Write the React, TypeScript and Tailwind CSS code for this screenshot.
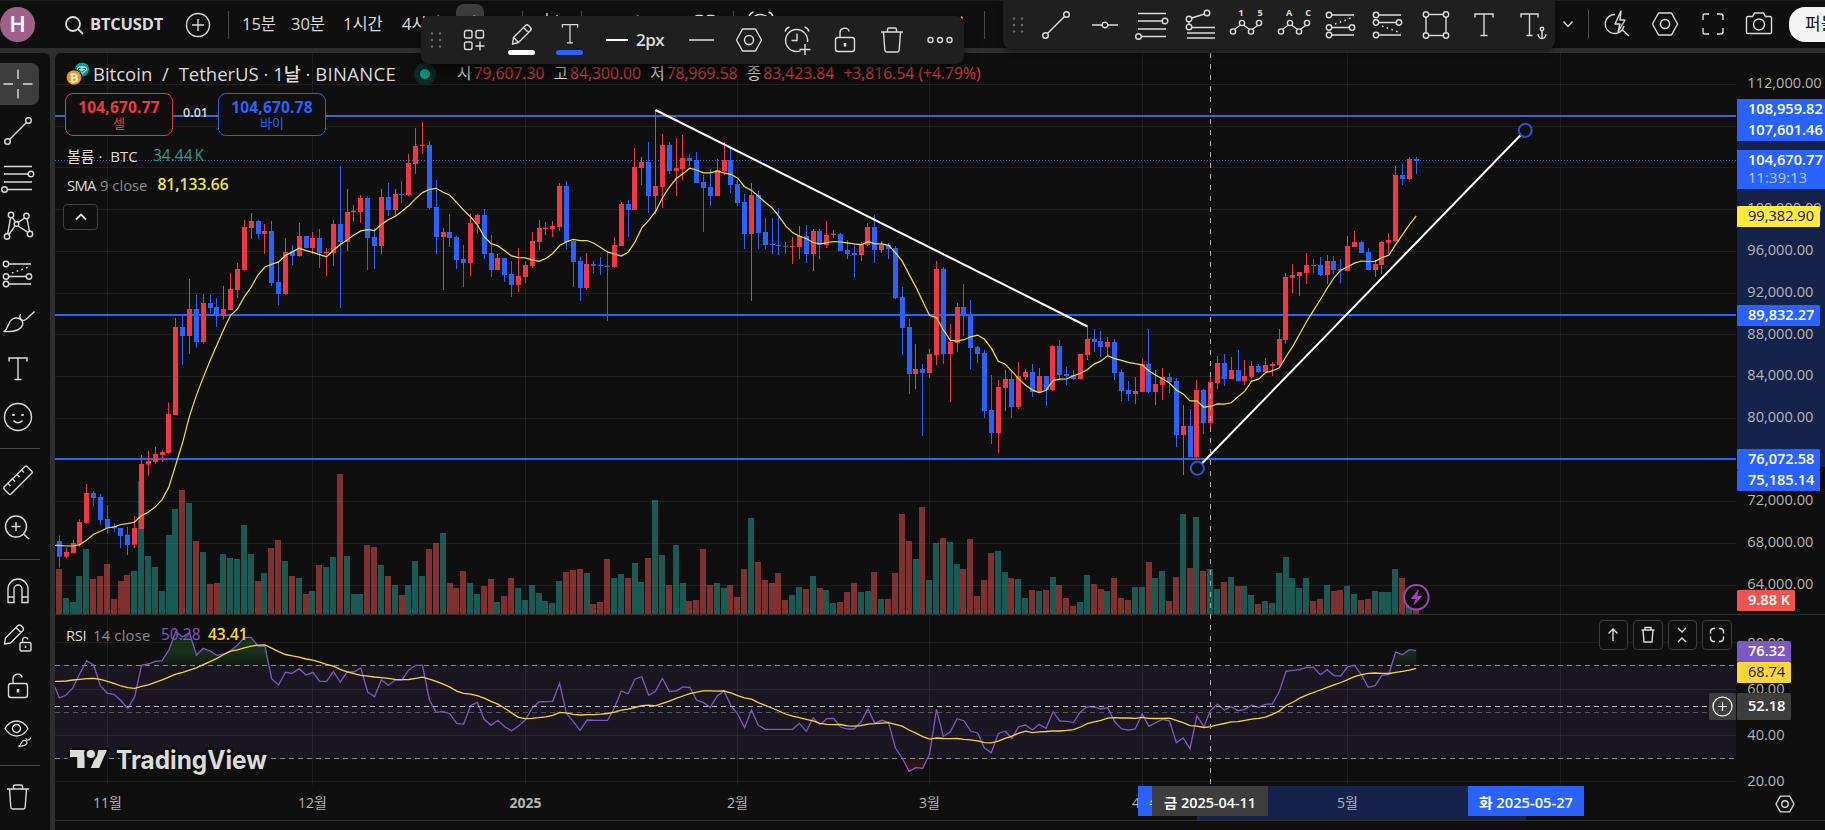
import React from 'react';

type Candle = [number, number, number, number, number]; // high, body top, body bottom, low, up

// Vertical values are stored in thirds of a pixel
const CANDLES: Candle[] = [
  [1606,1623,1670,1703,0],[1644,1656,1670,1676,1],[1618,1629,1659,1660,1],[1558,1566,1632,1640,1],[1452,1479,1569,1571,1],
  [1473,1479,1494,1520,0],[1482,1491,1560,1574,0],[1515,1557,1584,1601,0],[1570,1579,1585,1595,0],[1584,1584,1608,1644,0],
  [1581,1604,1635,1665,0],[1548,1584,1634,1644,1],[1365,1392,1587,1587,1],[1353,1383,1394,1427,1],[1341,1362,1386,1391,1],
  [1350,1356,1365,1386,1],[1207,1242,1359,1362,1],[954,981,1245,1245,1],[948,981,1008,1095,0],[837,927,1008,1062,1],
  [885,927,1026,1043,0],[882,909,1026,1031,1],[885,909,924,939,0],[894,921,945,981,0],[858,927,948,959,1],
  [819,867,930,930,1],[789,807,870,894,1],[660,681,810,812,1],[639,663,684,717,1],[660,663,702,717,0],
  [672,693,702,762,1],[663,693,849,858,0],[786,846,882,915,0],[714,756,882,885,1],[735,754,768,795,0],
  [669,708,768,770,1],[708,708,744,745,0],[696,714,744,762,1],[687,714,759,804,0],[744,756,760,828,1],
  [660,672,759,798,1],[498,672,726,924,0],[567,636,726,753,1],[615,632,637,665,1],[585,594,636,669,1],
  [588,594,714,810,0],[684,711,738,807,0],[567,591,738,762,1],[549,591,630,648,0],[567,582,630,648,1],
  [543,582,585,609,0],[462,489,585,588,1],[384,438,492,522,1],[366,434,438,462,1],[423,435,624,627,0],
  [540,621,711,762,0],[684,696,711,870,1],[642,696,714,741,0],[708,711,780,807,0],[735,777,789,861,0],
  [642,669,789,828,1],[642,645,672,702,1],[627,645,762,777,0],[705,759,810,831,0],[762,774,810,810,1],
  [774,774,825,846,0],[783,822,855,891,0],[744,828,855,876,1],[783,795,831,849,1],[696,723,798,804,1],
  [660,684,726,750,1],[666,683,687,705,1],[663,678,688,711,1],[549,558,681,693,1],[543,558,726,747,0],
  [717,723,786,861,0],[771,783,864,903,0],[759,792,864,870,1],[783,792,798,819,0],[771,794,798,825,0],
  [753,797,801,963,0],[711,735,801,804,1],[606,612,738,738,1],[600,612,630,711,0],[444,501,630,630,1],
  [471,486,504,555,1],[426,486,588,639,0],[330,558,588,642,1],[402,435,561,624,1],[426,435,513,522,0],
  [414,504,513,588,1],[405,474,507,540,1],[462,474,483,498,0],[456,480,549,549,0],[525,546,564,696,0],
  [507,561,588,618,0],[477,510,588,588,1],[426,480,513,525,1],[441,480,555,579,0],[540,552,609,618,0],
  [582,606,702,747,0],[549,585,702,903,1],[573,585,699,747,0],[654,696,735,747,0],[654,732,735,762,0],
  [624,735,738,765,0],[726,737,740,762,0],[711,738,741,792,1],[678,708,741,777,1],[675,708,762,789,0],
  [687,693,762,813,1],[687,693,735,777,0],[663,705,735,744,1],[690,701,705,714,1],[699,702,753,753,0],
  [720,750,762,777,0],[732,759,765,834,0],[726,732,765,783,1],[669,681,735,738,1],[645,681,750,789,0],
  [723,735,750,759,1],[729,735,747,777,0],[738,744,894,897,0],[861,891,984,1065,0],[957,981,1122,1182,0],
  [1032,1107,1122,1167,1],[1092,1107,1119,1308,0],[1047,1062,1119,1134,1],[783,807,1065,1095,1],[801,807,1062,1092,0],
  [972,1026,1062,1206,1],[909,921,1029,1056,1],[852,921,945,1008,0],[900,945,1044,1107,0],[1038,1041,1062,1089,0],
  [1050,1059,1233,1254,0],[1125,1230,1299,1332,0],[1140,1161,1299,1359,1],[1110,1137,1164,1233,1],[1116,1137,1221,1254,0],
  [1086,1128,1221,1227,1],[1107,1116,1131,1140,1],[1092,1116,1176,1191,0],[1104,1128,1176,1179,1],[1128,1128,1170,1218,0],
  [1035,1038,1170,1173,1],[1020,1038,1125,1137,0],[1101,1122,1128,1155,0],[1110,1125,1137,1140,0],[1062,1062,1137,1137,1],
  [978,1017,1065,1080,1],[987,1017,1026,1056,0],[993,1023,1041,1071,0],[1011,1026,1041,1068,1],[1017,1026,1119,1140,0],
  [1107,1116,1173,1203,0],[1143,1170,1182,1203,0],[1131,1173,1182,1212,1],[1077,1092,1176,1176,1],[987,1092,1176,1179,0],
  [1110,1152,1176,1215,1],[1104,1131,1155,1200,1],[1119,1131,1146,1179,0],[1134,1143,1305,1341,0],[1215,1278,1305,1425,1],
  [1227,1278,1371,1371,0],[1140,1170,1371,1380,1],[1167,1170,1269,1302,0],[1131,1146,1269,1281,1],[1068,1089,1149,1167,1],
  [1062,1089,1137,1158,0],[1071,1110,1137,1137,1],[1050,1110,1143,1143,0],[1080,1128,1143,1155,1],[1083,1098,1131,1137,1],
  [1092,1098,1116,1119,0],[1074,1095,1116,1119,1],[1086,1092,1098,1128,1],[987,1017,1095,1098,1],[819,831,1020,1032,1],
  [792,825,834,879,1],[816,816,828,888,1],[759,795,819,852,1],[777,795,798,819,0],[771,795,825,828,0],
  [765,783,825,852,1],[768,783,810,822,0],[777,807,812,850,0],[708,738,813,813,1],[693,726,741,741,1],
  [723,726,759,759,0],[744,756,810,810,0],[780,792,810,831,1],[723,726,795,822,1],[699,720,729,762,1],
  [498,525,723,726,1],[492,525,537,555,0],[471,477,537,540,1],[471,477,483,522,0],
];

const VOLUMES = [
  135,48,36,114,195,105,114,150,45,99,117,129,399,174,141,69,237,315,372,333,219,186,90,93,180,168,165,267,180,99,
  123,198,222,159,114,108,60,69,147,141,171,420,174,60,60,207,201,147,114,87,57,87,159,114,195,213,243,93,78,129,
  93,60,84,105,36,54,108,78,42,87,63,39,33,99,126,132,135,123,30,36,165,108,120,108,153,96,168,342,177,87,
  207,93,39,42,195,87,93,78,87,51,135,288,156,102,93,123,42,57,81,75,114,78,72,33,36,66,93,66,69,126,
  45,45,123,300,219,165,321,102,213,228,216,150,135,225,54,102,183,189,126,108,105,48,72,69,72,111,87,48,24,36,
  117,90,75,69,108,48,42,81,81,156,108,129,39,111,300,138,291,129,135,75,96,111,84,84,57,30,39,33,123,171,
  108,78,108,39,45,87,69,72,84,60,42,45,69,66,66,135,108,24,14,
];

// Offset from the top of the indicator pane, also in thirds
const RSI = [
  264,255,233,190,153,165,228,250,253,272,295,260,166,162,154,152,120,65,80,68,136,115,123,136,132,122,105,82,83,108,
  108,207,225,187,190,176,195,187,214,214,185,216,186,186,174,246,260,209,226,211,210,180,166,166,270,307,305,311,340,343,
  287,277,328,346,331,350,362,348,330,294,276,275,274,220,310,335,361,330,331,331,331,294,243,251,207,200,256,244,205,244,
  243,231,232,270,278,292,258,243,286,312,353,300,346,358,358,358,358,358,340,364,324,344,326,325,351,357,357,335,297,340,
  331,337,414,444,484,473,475,432,298,379,366,326,332,363,369,414,428,371,363,385,350,345,360,343,355,305,333,334,337,306,
  290,291,297,293,335,357,360,357,312,349,338,328,333,398,384,416,317,350,301,282,300,290,302,298,286,292,283,282,246,184,
  181,179,172,172,194,179,197,198,170,166,194,232,227,196,193,126,134,119,121,
];

const SMA_SEED = [1636, 1638, 1638, 1634, 1620, 1603, 1594, 1584];
const RSI_SEED = [214, 213, 210, 208, 206, 205, 208, 214, 220, 228, 233, 235, 229];

const barX = (i: number) => 59.3 + i * 6.853;

const average = (values: number[], length: number, seed: number[]) =>
  values.map((_, i) =>
    i < seed.length ? seed[i] : values.slice(i - length + 1, i + 1).reduce((a, b) => a + b, 0) / length
  );

const toPoints = (ys: number[]) => ys.map((y, i) => `${barX(i).toFixed(1)},${y.toFixed(1)}`).join(' ');

const closes = CANDLES.map(([, top, bottom, , up]) => (up ? top : bottom));
const smaPoints = '55,545.3 ' + toPoints(average(closes, 9, SMA_SEED).map((v) => v / 3));
const rsiPoints = '55,687.3 ' + toPoints(RSI.map((v) => 610 + v / 3));
const rsiMaPoints = '55,681.3 ' + toPoints(average(RSI, 14, RSI_SEED).map((v) => 610 + v / 3));

const FONT = "font-['Open_Sans','Noto_Sans_CJK_KR',sans-serif]";

const MONTHS = [
  { x: 107.5, label: '11월' },
  { x: 312.5, label: '12월' },
  { x: 525.5, label: '2025', bold: true },
  { x: 737.5, label: '2월' },
  { x: 929.5, label: '3월' },
  { x: 1142.5, label: '4월' },
  { x: 1347.5, label: '5월' },
  { x: 1560.5, label: '' },
];
const PRICE_ROWS = [84.5, 126.5, 167.5, 209.5, 251.5, 293.5, 334.5, 376.5, 418.5, 501.5, 543.5, 585.5];
const RSI_ROWS = [642.5, 689.5, 735.5, 781.5];

const PRICE_TICKS: [number, string][] = [
  [83, '112,000.00'], [208, '100,000.00'], [250, '96,000.00'], [292, '92,000.00'], [334, '88,000.00'],
  [375, '84,000.00'], [417, '80,000.00'], [500, '72,000.00'], [542, '68,000.00'], [584, '64,000.00'],
  [643, '80.00'], [689, '60.00'], [735, '40.00'], [781, '20.00'],
];

interface IconProps {
  children: React.ReactNode;
  size?: number;
  className?: string;
}

const Icon: React.FC<IconProps> = ({ children, size = 32, className = '' }) => (
  <svg
    width={size}
    height={size}
    viewBox={`${-size / 2} ${-size / 2} ${size} ${size}`}
    fill="none"
    stroke="currentColor"
    strokeWidth={1.4}
    className={`shrink-0 overflow-visible ${className}`}
  >
    {children}
  </svg>
);

const TrendLineIcon = () => (
  <Icon>
    <circle cx="-10.5" cy="10.5" r="2.8" />
    <circle cx="10.5" cy="-10.5" r="2.8" />
    <path d="M-8.5 8.5 8.5-8.5" />
  </Icon>
);

const FibIcon = () => (
  <Icon>
    <path d="M-14-11.5H14M-14-4H10M-14 4H14M-11 11.5H14" />
    <circle cx="13" cy="-4" r="2.8" />
    <circle cx="-13.500" cy="11.500" r="2.8" />
  </Icon>
);

const FibTrendIcon = () => (
  <Icon>
    <circle cx="9" cy="-12" r="2.8" />
    <circle cx="-9" cy="-6" r="2.8" />
    <circle cx="-9" cy="2" r="2.8" />
    <path d="M6.500-11-6.500-7M-9-3.200v2.400M-6 2.500H17M-11 8H17M-11 13H17" />
  </Icon>
);

const WaveIcon: React.FC<{ left: string; right: string }> = ({ left, right }) => (
  <Icon>
    <circle cx="-13" cy="6.500" r="2.600" />
    <circle cx="-4" cy="-2" r="2.600" />
    <circle cx="5" cy="6.500" r="2.600" />
    <circle cx="13" cy="-2" r="2.600" />
    <path d="M-11.500 4.200-5.500 0M-2.500 0 3.500 4.500M6.500 4.200 11.700 0.500" />
    <text x="-5" y="-9" fontSize="9" fontWeight="700" fill="currentColor" stroke="none" textAnchor="middle">{left}</text>
    <text x="14" y="-9" fontSize="9" fontWeight="700" fill="currentColor" stroke="none" textAnchor="middle">{right}</text>
  </Icon>
);

const LongPositionIcon = () => (
  <Icon>
    <circle cx="-12" cy="-10" r="2.700" />
    <circle cx="-12" cy="2.500" r="2.700" />
    <circle cx="11" cy="2.500" r="2.700" />
    <circle cx="-12" cy="10" r="2.700" />
    <path d="M-9.300-10H13M-9.300 2.500H8.300M-9.300 10H13" />
    <path d="M-6-1 13-8" strokeDasharray="1.600 3.400" />
  </Icon>
);

const ShortPositionIcon = () => (
  <Icon>
    <circle cx="-12" cy="-10" r="2.700" />
    <circle cx="-12" cy="-2.500" r="2.700" />
    <circle cx="11" cy="-2.500" r="2.700" />
    <circle cx="-12" cy="10" r="2.700" />
    <path d="M-9.300-10H13M-9.300-2.500H8.300M-9.300 10H13" />
    <path d="M-6 1 13 8" strokeDasharray="1.600 3.400" />
  </Icon>
);

const TextIcon = () => (
  <Icon>
    <path d="M-9-7.500V-11H9V-7.500M0-11V10.500M-3.500 10.500H3.500" />
  </Icon>
);

const HexIcon: React.FC<{ small?: boolean }> = ({ small }) => (
  <Icon>
    <g transform={small ? 'scale(.72)' : undefined} strokeWidth={small ? 1.9 : 1.4}>
      <path d="M-6.500-11H6.500L12.500 0 6.500 11H-6.500L-12.500 0Z" strokeLinejoin="round" />
      <circle r="4.500" />
    </g>
  </Icon>
);

const TrashIcon = () => (
  <Icon>
    <path d="M-11-8H11M-4.500-8V-10.500Q-4.500-12-3-12H3Q4.500-12 4.500-10.500V-8M-8.500-8-7.200 10Q-7 12-5.500 12H5.500Q7 12 7.200 10L8.500-8" />
  </Icon>
);

const UnlockIcon = () => (
  <Icon>
    <rect x="-9.500" y="-2.500" width="19" height="14" rx="2.500" />
    <path d="M-5-2.500V-7a4.700 4.700 0 0 1 9.200-1.500" />
    <path d="M0 3V6.500" strokeWidth="2.600" />
  </Icon>
);

const PencilIcon = () => (
  <Icon>
    <path d="M-9.500 10-8.500 3.500 3.500-8.500Q5-10 6.500-8.500L8.500-6.500Q10-5 8.500-3.500L-3.500 8.500ZM1.500-6.500 6.500-1.500M-8 4-4 8" strokeLinejoin="round" />
  </Icon>
);

const CrosshairIcon = () => (
  <Icon>
    <path d="M0-14.500V-5M0 5V14.500M-14.500 0H-5M5 0H14.500" />
  </Icon>
);

const PatternIcon = () => (
  <Icon>
    <circle cx="-7" cy="-11" r="2.700" />
    <circle cx="8.500" cy="-10" r="2.700" />
    <circle cx="-1.500" cy="-2" r="2.300" />
    <circle cx="-11" cy="10.500" r="2.700" />
    <circle cx="12" cy="8" r="2.700" />
    <path d="M-7.500-8.300-10.300 7.900M-5.800-8.700-2.500-4M6.800-8 0.300-3.600M9-7.300 11.500 5.300M0 0 10 6.300M-3-.2-9 8.500" />
  </Icon>
);

const BrushIcon = () => (
  <Icon>
    <path d="M-14 10.500C-9 7-10.500 1-5.500-2 0-5 6-.5 4.500 4 3 9-4 11-14 10.500Z" strokeLinejoin="round" />
    <path d="M2.500-7C.5-3 4 1 8-1.500L16.500-9.500" />
  </Icon>
);

const SmileIcon = () => (
  <Icon>
    <circle r="13.500" />
    <path d="M-4.500 3.500Q0 8 4.500 3.500" />
    <path d="M-4.500-3V-1M4.500-3V-1" strokeWidth="2.400" />
  </Icon>
);

const RulerIcon = () => (
  <Icon>
    <path d="M-14 7 7-13.500Q8-14.500 9-13.500L14-8.500Q14.500-7.500 14-7L-7 14Q-8 15-9 14L-14 9Q-14.500 8 -14 7ZM-10 3.500-7.500 6M-5.500-1-3 1.500M-1-5.500 1.500-3M3.500-10 6-7.500" strokeLinejoin="round" />
  </Icon>
);

const ZoomInIcon = () => (
  <Icon>
    <circle cx="-2" cy="-.5" r="10.500" />
    <path d="M5.500 7 11 12M-6.500-.5H2.500M-2-5V4" />
  </Icon>
);

const MagnetIcon = () => (
  <Icon>
    <path d="M-10 11.500V-2A10 10 0 0 1 10-2V11.500H4V-2A4 4 0 0 0-4-2V11.500ZM-10 6H-4M4 6H10" />
  </Icon>
);

const PencilLockIcon = () => (
  <Icon>
    <path d="M-13.500 6-12.500 0 0-12.500Q1.500-13.500 3-12.500L5-10.500Q6-9 5-7.500L-7.500 5ZM-2-10.500 3-5.500" strokeLinejoin="round" />
    <rect x="2" y="4.500" width="11" height="8.500" rx="1.500" />
    <path d="M4.500 4.500V2A2.800 2.800 0 0 1 10 1.500M7.500 7.500V10" />
  </Icon>
);

const EyeIcon = () => (
  <Icon>
    <path d="M-13-5.500C-7-15.500 4-15.500 10-5.500 4 4.500-7 4.500-13-5.500Z" strokeLinejoin="round" />
    <circle cx="-1.500" cy="-5.500" r="4" />
    <path d="M1 12C4 10 3 6 7 6.500 11 8 9 12.500 1 12ZM8 4C8 7 11 7 13 3.500" strokeWidth="1.200" />
  </Icon>
);

const LayoutPlusIcon = () => (
  <Icon>
    <rect x="-9.500" y="-9.500" width="7.500" height="7.500" rx="1.800" />
    <rect x="2" y="-9.500" width="7.500" height="7.500" rx="1.800" />
    <rect x="-9.500" y="2" width="7.500" height="7.500" rx="1.800" />
    <path d="M6 1.500V10.500M1.500 6H10.500" />
  </Icon>
);

const AlarmPlusIcon = () => (
  <Icon>
    <path d="M3.500 10.800A11 11 0 1 1 10.500 2M0-6.500V.5H-5.500M-12-8.500Q-11-12-7.500-13M12-8.500Q11-12 7.500-13M8 4V15M2.500 9.500H13.500" />
  </Icon>
);

const Grip = () => (
  <Icon size={20} className="text-[#6a6a6a]">
    {[-6.5, 0, 6.5].map((y) => (
      <g key={y} fill="currentColor" stroke="none">
        <circle cx="-4" cy={y} r="1.2" />
        <circle cx="4" cy={y} r="1.2" />
      </g>
    ))}
  </Icon>
);

const Divider = () => <div className="h-7 w-px shrink-0 bg-[#4a4a4a]" />;

const Slot: React.FC<{ width: string; children: React.ReactNode }> = ({ width, children }) => (
  <button className={`flex h-full shrink-0 items-center justify-center ${width}`}>{children}</button>
);

const TopBar = () => (
  <header className="relative flex h-12 shrink-0 items-center overflow-hidden border-t border-[#1c1c1c] bg-[#0f0f0f]">
    <div className="flex h-[35px] w-[35px] items-center justify-center rounded-full bg-[#a0608a] font-['Roboto'] text-[22px] font-medium text-white">
      H
    </div>
    <div className="ml-[29px] flex items-center gap-[6px]">
      <Icon size={20}>
        <circle cx="-1" cy="-1" r="7" strokeWidth="1.8" />
        <path d="M4 4 9 9" strokeWidth="1.8" />
      </Icon>
      <span className="w-[73px] text-[16.5px] font-bold tracking-[-0.2px]">BTCUSDT</span>
    </div>
    <div className="ml-[19px]">
      <Icon>
        <circle r="11.500" />
        <path d="M-6 0H6M0-6V6" />
      </Icon>
    </div>
    <div className="ml-[14px] flex items-center whitespace-nowrap text-[16.5px]">
      <Divider />
      <span className="ml-[13px] w-[49px]">15분</span>
      <span className="w-[52px]">30분</span>
      <span className="w-[59px]">1시간</span>
      <span className="w-[54px]">4시간</span>
      <span className="h-[42px] w-7 rounded-lg bg-[#3d3d3d] pt-2 text-center">날</span>
    </div>
    <div className="ml-[38px] flex items-center whitespace-nowrap">
      <Divider />
      <div className="ml-[11px] mr-[15px]">
        <Icon>
          <path d="M-6-8H0V8H-6ZM-3-12V-8M-3 8V12M4-5H10V5H4ZM7-10V-5M7 5V10" />
        </Icon>
      </div>
      <Divider />
      <span className="ml-[22px] w-[85px] text-[18px]">fx 지표</span>
      <div className="mr-[12px]">
        <Icon>
          <rect x="-9.500" y="-9.500" width="7.500" height="7.500" rx="1.800" />
          <rect x="2" y="-9.500" width="7.500" height="7.500" rx="1.800" />
        </Icon>
      </div>
      <Divider />
      <div className="ml-[11px]">
        <AlarmPlusIcon />
      </div>
      <span className="ml-[10px] w-[115px] text-[17px]">얼러트</span>
      <span className="w-[82px] text-[17px]">리플레이</span>
    </div>
    <Divider />
  </header>
);

const SelectionToolbar = () => (
  <div className="absolute left-[421px] top-4 flex h-12 w-[543px] items-center rounded-lg bg-[#1f1f1f] shadow-lg shadow-black/50">
    <Slot width="w-[30px]"><Grip /></Slot>
    <Slot width="w-[46px]"><LayoutPlusIcon /></Slot>
    <Slot width="w-[49px]">
      <div className="flex flex-col items-center">
        <div className="-mt-1 h-[25px]"><div className="-mt-[3px]"><PencilIcon /></div></div>
        <div className="mt-1 h-[5px] w-[27px] rounded-full bg-white" />
      </div>
    </Slot>
    <Slot width="w-[47px]">
      <div className="flex flex-col items-center">
        <div className="-mt-1 h-[25px]"><div className="-mt-[3px] scale-[.85]"><TextIcon /></div></div>
        <div className="mt-1 h-[5px] w-[27px] rounded-full bg-[#2962ff]" />
      </div>
    </Slot>
    <Slot width="w-[84px]">
      <div className="h-[2px] w-[22px] bg-white" />
      <span className="ml-2 text-[17px] font-semibold tracking-[-0.5px]">2px</span>
    </Slot>
    <Slot width="w-[49px]"><div className="h-[1.5px] w-[25px] bg-[#b0b0b0]" /></Slot>
    <Slot width="w-[46px]"><HexIcon /></Slot>
    <Slot width="w-[50px]"><AlarmPlusIcon /></Slot>
    <Slot width="w-[45px]"><UnlockIcon /></Slot>
    <Slot width="w-[50px]"><TrashIcon /></Slot>
    <Slot width="w-[46px]">
      <Icon>
        <circle cx="-9.500" r="2.500" />
        <circle r="2.500" />
        <circle cx="9.500" r="2.500" />
      </Icon>
    </Slot>
  </div>
);

const FavoritesToolbar = () => (
  <div className="absolute right-0 top-0 flex h-[49px] w-[822px] items-center">
    <div className="flex h-full w-[552px] items-center rounded-b-lg bg-[#1f1f1f] shadow-md shadow-black/40">
      <Slot width="w-[29px]"><Grip /></Slot>
      <Slot width="w-[48px]"><TrendLineIcon /></Slot>
      <Slot width="w-[49px]">
        <Icon>
          <circle r="2.800" />
          <path d="M-13 0H-2.800M2.800 0H13" />
        </Icon>
      </Slot>
      <Slot width="w-[45px]"><FibIcon /></Slot>
      <Slot width="w-[48px]"><FibTrendIcon /></Slot>
      <Slot width="w-[48px]"><WaveIcon left="1" right="5" /></Slot>
      <Slot width="w-[47px]"><WaveIcon left="A" right="C" /></Slot>
      <Slot width="w-[47px]"><LongPositionIcon /></Slot>
      <Slot width="w-[48px]"><ShortPositionIcon /></Slot>
      <Slot width="w-[47px]">
        <Icon>
          <rect x="-10" y="-10.500" width="20" height="21" />
          <g fill="#1f1f1f">
            <circle cx="-10" cy="-10.500" r="2.700" />
            <circle cx="10" cy="-10.500" r="2.700" />
            <circle cx="-10" cy="10.500" r="2.700" />
            <circle cx="10" cy="10.500" r="2.700" />
          </g>
        </Icon>
      </Slot>
      <Slot width="w-[50px]"><TextIcon /></Slot>
      <Slot width="w-[46px]">
        <Icon>
          <path d="M-11-7.500V-11H6V-7.500M-2.500-11V10.500M-5.500 10.500H.5" />
          <circle cx="10" cy="4" r="1.700" />
          <path d="M10 5.500V13.500M6 9Q6.500 13.500 10 13.500 13.500 13.500 14 9" />
        </Icon>
      </Slot>
    </div>
    <div className="flex h-full grow items-center pb-px">
      <Slot width="w-[26px]"><Icon size={20}><path d="M-4.500-2.500 0 2.500 4.500-2.500" /></Icon></Slot>
      <div className="ml-[7px]"><Divider /></div>
      <div className="ml-[12px]">
        <Icon>
          <path d="M-2-9.500A9.500 9.500 0 1 0 7 2M5.500 6 12 12M4-13-2 0H3L1 8 8-4H3Z" strokeLinejoin="round" />
        </Icon>
      </div>
      <Slot width="w-[64px]"><HexIcon /></Slot>
      <Slot width="w-[32px]">
        <Icon>
          <path d="M-10-4V-8Q-10-10-8-10H-4M4-10H8Q10-10 10-8V-4M10 4V8Q10 10 8 10H4M-4 10H-8Q-10 10-10 8V4" />
        </Icon>
      </Slot>
      <Slot width="w-[60px]">
        <Icon>
          <path d="M-12.500-6Q-12.500-7.500-11-7.500H-6.500L-4.500-11H4.500L6.500-7.500H11Q12.500-7.500 12.500-6V8Q12.500 9.500 11 9.500H-11Q-12.500 9.500-12.500 8Z" />
          <circle r="5.500" cy=".5" />
        </Icon>
      </Slot>
    </div>
    <div className="h-[35px] w-9 overflow-hidden whitespace-nowrap rounded-l-[16px] bg-[#f5f5f5] pl-[16px] text-[17px] leading-[33px] text-[#111]">
      퍼블리시
    </div>
  </div>
);

const SideGroup: React.FC<{ items: React.FC[] }> = ({ items }) => (
  <>
    {items.map((Item, i) => (
      <button key={i} className="flex h-[47.65px] w-[35px] shrink-0 items-center justify-center">
        <Item />
      </button>
    ))}
  </>
);

const SideDivider = () => (
  <div className="flex h-[15.5px] w-10 shrink-0 items-center">
    <div className="h-px w-full bg-[#4a4a4a]" />
  </div>
);

const SideBar = () => (
  <nav className="flex w-[50px] shrink-0 flex-col overflow-hidden rounded-tr-md bg-[#0f0f0f] pt-[7px]">
    <button className="flex h-[47px] shrink-0 items-center">
      <span className="flex h-[42px] w-[39px] items-center justify-center rounded-r-lg bg-[#3d3d3d] pr-[3px]">
        <CrosshairIcon />
      </span>
    </button>
    <SideGroup items={[TrendLineIcon, FibIcon, PatternIcon, LongPositionIcon, BrushIcon, TextIcon, SmileIcon]} />
    <SideDivider />
    <SideGroup items={[RulerIcon, ZoomInIcon]} />
    <SideDivider />
    <SideGroup items={[MagnetIcon, PencilLockIcon, UnlockIcon, EyeIcon]} />
    <SideDivider />
    <SideGroup items={[TrashIcon]} />
  </nav>
);

interface TagProps {
  y: number;
  h?: number;
  w?: number;
  fill: string;
  text: string;
  color?: string;
  bold?: boolean;
}

const Tag: React.FC<TagProps> = ({ y, h = 21, w = 83, fill, text, color = '#fff', bold = true }) => (
  <g>
    <rect x="1737" y={y} width={w} height={h} fill={fill} rx="1.5" />
    <text x="1748" y={y + h / 2 + 4.5} fill={color} fontWeight={bold ? 600 : 400}>{text}</text>
  </g>
);

const Chart = () => (
  <svg width="1770" height="777" viewBox="55 53 1770 777" className={`block ${FONT}`} fontSize="14.6">
    <defs>
      <linearGradient id="overbought" x1="0" y1="628" x2="0" y2="666" gradientUnits="userSpaceOnUse">
        <stop offset="0" stopColor="#2e7d32" stopOpacity=".2" />
        <stop offset=".6" stopColor="#2e7d32" stopOpacity=".32" />
        <stop offset="1" stopColor="#2e7d32" stopOpacity=".08" />
      </linearGradient>
      <linearGradient id="oversold" x1="0" y1="758" x2="0" y2="775" gradientUnits="userSpaceOnUse">
        <stop offset="0" stopColor="#f23645" stopOpacity=".06" />
        <stop offset="1" stopColor="#f23645" stopOpacity=".25" />
      </linearGradient>
      <clipPath id="above"><rect x="55" y="615" width="1681" height="50.5" /></clipPath>
      <clipPath id="below"><rect x="55" y="758.5" width="1681" height="26" /></clipPath>
    </defs>

    {/* Grid */}
    <rect x="55" y="665.5" width="1681" height="93" fill="#7e57c2" fillOpacity=".1" />
    <g stroke="#f2f2f2" strokeOpacity=".065">
      {MONTHS.map((m) => <path key={m.x} d={`M${m.x} 53V785`} />)}
      {[...PRICE_ROWS, ...RSI_ROWS].map((y) => <path key={y} d={`M55 ${y}H1736`} />)}
    </g>

    {/* Volume */}
    {VOLUMES.map((v, i) => (
      <rect
        key={i}
        x={Math.round(barX(i) - 3.4)}
        y={614 - v / 3}
        width="6"
        height={v / 3}
        fill={CANDLES[i][4] ? '#26a69a' : '#ef5350'}
        fillOpacity=".5"
      />
    ))}

    {/* Levels under the candles */}
    <g stroke="#2962ff" strokeWidth="2">
      <path d="M55 116H1736" stroke="#3c62c4" />
      <path d="M55 315H1736M55 459H1736" />
    </g>
    <path d="M55 160.500H1736" stroke="#3d62cf" strokeDasharray="1 2" />

    {/* Candles */}
    {CANDLES.map(([high, top, bottom, low, up], i) => {
      const x = Math.round(barX(i) - 0.5);
      return (
        <g key={i} fill={up ? '#f23645' : '#2962ff'}>
          <rect x={x} y={high / 3} width="1" height={(low - high) / 3} />
          <rect x={x - 2} y={top / 3} width="5" height={Math.max(1, (bottom - top) / 3)} />
        </g>
      );
    })}
    <polyline points={smaPoints} fill="none" stroke="#f5e23c" strokeWidth="1.2" />

    {/* Drawings */}
    <g stroke="#fff" strokeWidth="2">
      <path d="M655.500 110 1087.500 326.500M1197.300 468.300 1525.300 130.300" />
    </g>
    <g fill="#0f0f0f" stroke="#2456d6" strokeWidth="2">
      <circle cx="1197.300" cy="468.300" r="6.500" />
      <circle cx="1525.300" cy="130.300" r="6.500" />
    </g>
    <circle cx="1416.300" cy="597.300" r="12.300" fill="#0f0f0f" stroke="#a044b8" strokeWidth="2" />
    <path d="M1418.500 590 1411.500 598.500H1416.500L1414 604.500 1421.500 596.500H1416.500Z" fill="#a044b8" stroke="#a044b8" />

    {/* RSI pane */}
    <path d="M55 614.500H1825M55 820.500H1825" stroke="#2e2e2e" />
    <polygon points={`${rsiPoints} 1416.3,665.5 55,665.5`} fill="url(#overbought)" clipPath="url(#above)" />
    <polygon points={`${rsiPoints} 1416.3,758.5 55,758.5`} fill="url(#oversold)" clipPath="url(#below)" />
    <g stroke="#8a8a8a" strokeDasharray="5 4">
      <path d="M55 665.500H1736M55 758.500H1736" />
      <path d="M55 712.500H1736" stroke="#55525a" />
    </g>
    <polyline points={rsiPoints} fill="none" stroke="#7e57c2" strokeWidth="1.300" />
    <polyline points={rsiMaPoints} fill="none" stroke="#f5d33a" strokeWidth="1.300" />

    {/* Crosshair */}
    <path d="M55 706.500H1736" stroke="#b4b4b4" strokeDasharray="5 4" />
    <path d="M1210.500 53V785" stroke="#a8a8a8" strokeDasharray="5 6" />

    {/* Watermark */}
    <g fill="#dbdbdb" stroke="#0f0f0f" strokeWidth="5" strokeLinejoin="round">
      <g transform="translate(70 746) scale(1.04 1)">
        <path d="M14 22H7V11H0V4h14v18zM28 22h-8l7.500-18h8L28 22z" className="[paint-order:stroke]" />
        <circle cx="20" cy="8" r="4" className="[paint-order:stroke]" />
      </g>
      <text
        x="116"
        y="768.500"
        fontSize="25"
        fontWeight="700"
        textLength="151"
        lengthAdjust="spacingAndGlyphs"
        className="font-['Inter',sans-serif] [paint-order:stroke]"
      >
        TradingView
      </text>
    </g>

    {/* Price axis */}
    <rect x="1737" y="99" width="88" height="368" fill="#15234b" />
    <g fill="#b4b4b4">
      {PRICE_TICKS.map(([y, label]) => <text key={y} x="1747.300" y={y + 4.5}>{label}</text>)}
    </g>
    <rect x="1737" y="99" width="88" height="42" fill="#2962ff" />
    <Tag y={99} w={88} fill="#2962ff" text="108,959.82" />
    <Tag y={120} w={88} fill="#2962ff" text="107,601.46" />
    <rect x="1737" y="150" width="88" height="39" fill="#2962ff" />
    <Tag y={150} w={88} fill="#2962ff" text="104,670.77" />
    <text x="1748" y="183" fill="#bccdff" letterSpacing=".2">11:39:13</text>
    <Tag y={206} fill="#ffeb3b" color="#131722" bold={false} text="99,382.90" />
    <Tag y={305} fill="#2962ff" text="89,832.27" />
    <Tag y={449} fill="#2962ff" text="76,072.58" />
    <Tag y={470} fill="#2962ff" text="75,185.14" />
    <Tag y={590} w={58} fill="#ef5350" text="9.88 K" />
    <Tag y={641} w={54} fill="#7e57c2" text="76.32" />
    <Tag y={662} w={54} fill="#fdd835" color="#131722" bold={false} text="68.74" />
    <Tag y={693} h={27} w={54} fill="#3d3d3d" text="52.18" />
    <rect x="1709" y="693" width="27" height="27" rx="1.500" fill="#3d3d3d" />
    <g stroke="#fff" fill="none" strokeWidth="1.200">
      <circle cx="1722.500" cy="706.500" r="9.500" />
      <path d="M1718 706.500H1727M1722.500 702V711" />
    </g>

    {/* Time axis */}
    <rect x="1197" y="786" width="329" height="34" fill="#15234b" />
    <g fill="#b4b4b4" textAnchor="middle" fontSize="14">
      {MONTHS.map((m) => (
        <text key={m.x} x={m.x} y="808" fontWeight={m.bold ? 700 : 400}>{m.label}</text>
      ))}
    </g>
    <rect x="1138" y="786" width="30" height="30" fill="#2962ff" />
    <text x="1149" y="808" fill="#fff">수</text>
    <rect x="1152" y="786" width="116" height="30" fill="#3d3d3d" />
    <rect x="1468" y="786" width="116" height="30" fill="#2962ff" />
    <g fill="#fff" fontWeight="600" fontSize="14">
      <text x="1164" y="808" textLength="92" lengthAdjust="spacingAndGlyphs">금 2025-04-11</text>
      <text x="1479" y="808" textLength="94" lengthAdjust="spacingAndGlyphs">화 2025-05-27</text>
    </g>
  </svg>
);

const OHLC = [
  ['시', '79,607.30'],
  ['고', '84,300.00'],
  ['저', '78,969.58'],
  ['종', '83,423.84'],
];

const Legend = () => (
  <div className="absolute left-[8px] top-[8px] text-[#dbdbdb]">
    <div className="flex h-[26px] items-center">
      <svg width="24" height="24" viewBox="0 0 24 24" className="ml-[3px]">
        <circle cx="16" cy="7.500" r="7" fill="#0b9c9c" />
        <path d="M12.500 5H19.500L21 7.500 16 11.500 11 7.500ZM13 7.500Q16 9 19 7.500M16 5V8" stroke="#fff" strokeWidth="1" fill="none" />
        <circle cx="8" cy="15.500" r="8.500" fill="#0f0f0f" />
        <circle cx="8" cy="15.500" r="7.300" fill="#f7931a" />
        <text x="8" y="19.500" fontSize="11" fontWeight="700" fill="#fff" textAnchor="middle">₿</text>
      </svg>
      <h1 className="ml-[3px] w-[321px] whitespace-nowrap text-[18.500px] font-medium">
        Bitcoin<span className="mx-[5px]"> / </span>TetherUS · 1날 · <span className="tracking-[0.3px]">BINANCE</span>
      </h1>
      <span className="flex h-[22px] w-[22px] items-center justify-center rounded-full bg-[#0d2b27]">
        <span className="h-[10px] w-[10px] rounded-full bg-[#0b9c82]" />
      </span>
      <div className="ml-[21px] flex text-[15.7px]">
        {OHLC.map(([name, value]) => (
          <span key={name} className="w-[96.600px] whitespace-nowrap">
            {name}
            <span className="ml-[2px] text-[#e0384a]">{value}</span>
          </span>
        ))}
        <span className="whitespace-nowrap text-[#e0384a]">+3,816.54 (+4.79%)</span>
      </div>
    </div>
    <div className="ml-[2px] mt-[6px] flex h-[43px] items-center">
      <button className="flex h-full w-[108px] flex-col items-center rounded-lg border border-[#d83a48] bg-[#0f0f0f] pt-[4px] text-[#f23645]">
        <span className="text-[15.500px] font-bold leading-[18px] tracking-[0.2px]">104,670.77</span>
        <span className="text-[13px] leading-[15px]">셀</span>
      </button>
      <span className="w-[45px] pb-[3px] text-center text-[12.5px] font-semibold">0.01</span>
      <button className="flex h-full w-[108px] flex-col items-center rounded-lg border border-[#2f5fe0] bg-[#0f0f0f] pt-[4px] text-[#2962ff]">
        <span className="text-[15.500px] font-bold leading-[18px] tracking-[0.2px]">104,670.78</span>
        <span className="text-[13px] leading-[15px]">바이</span>
      </button>
    </div>
    <div className="ml-1 mt-[7px] flex h-[26px] items-center whitespace-nowrap text-[15px]">
      <span className="w-[76px]">볼륨&nbsp;·&nbsp;&nbsp;BTC</span>
      <span className="ml-[10px] text-[15.5px] text-[#2b9a8c] [word-spacing:-2px]">34.44 K</span>
    </div>
    <div className="ml-1 mt-[3px] flex h-[26px] items-center whitespace-nowrap text-[14.8px]">
      <span className="w-[29px] tracking-[-0.7px]">SMA</span>
      <span className="ml-[4px] text-[#8a8a8a]">9 close</span>
      <span className="ml-[10px] text-[15.700px] font-semibold text-[#f5e642]">81,133.66</span>
    </div>
    <button className="mt-[6px] flex h-[26px] w-[35px] items-center justify-center rounded border border-[#404040] bg-[#0f0f0f]">
      <Icon size={20}><path d="M-5 2.500 0-2.500 5 2.500" strokeWidth="1.800" /></Icon>
    </button>
  </div>
);

const PANE_ACTIONS = [
  'M0 6V-6M-4.500-1.500 0-6 4.500-1.500',
  'M-6.500-5H6.500M-3-5V-7.500H3V-5M-5-5-4 7H4L5-5',
  'M-4-7 0-3 4-7M-4 7 0 3 4 7',
  'M-6.500-1.500V-3Q-6.500-6.500-3-6.500H-2M2-6.500H3Q6.500-6.500 6.500-3V-1.500M6.500 1.500V3Q6.500 6.500 3 6.500H2M-2 6.500H-3Q-6.500 6.500-6.500 3V1.500',
];

export default function App() {
  return (
    <div className={`relative flex h-[830px] w-[1825px] flex-col overflow-hidden bg-[#2e2e2e] text-[#dbdbdb] ${FONT}`}>
      <TopBar />
      <div className="flex grow gap-[5px] pt-[5px]">
        <SideBar />
        <main className="relative grow overflow-hidden rounded-tl-md bg-[#0f0f0f]">
          <Chart />
          <Legend />
          <div className="absolute left-[11px] top-[569px] flex h-[26px] items-center whitespace-nowrap text-[14.8px]">
            <span className="w-[22px] tracking-[-0.4px]">RSI</span>
            <span className="ml-[5px] w-[58px] tracking-[0.2px] text-[#8a8a8a]">14 close</span>
            <span className="ml-[10px] w-[47px] text-[15.5px] text-[#7e57c2]">50.28</span>
            <span className="text-[15.5px] font-semibold text-[#fdd835]">43.41</span>
          </div>
          <div className="absolute left-[1543.500px] top-[567px] flex gap-[5px]">
            {PANE_ACTIONS.map((d) => (
              <button key={d} className="flex h-[30px] w-[29.500px] items-center justify-center rounded border border-[#3d3d3d] bg-[#0f0f0f]">
                <Icon size={20}><path d={d} /></Icon>
              </button>
            ))}
          </div>
          <div className="absolute left-[1714px] top-[735px]">
            <HexIcon small />
          </div>
        </main>
      </div>
      <FavoritesToolbar />
      <SelectionToolbar />
    </div>
  );
}
